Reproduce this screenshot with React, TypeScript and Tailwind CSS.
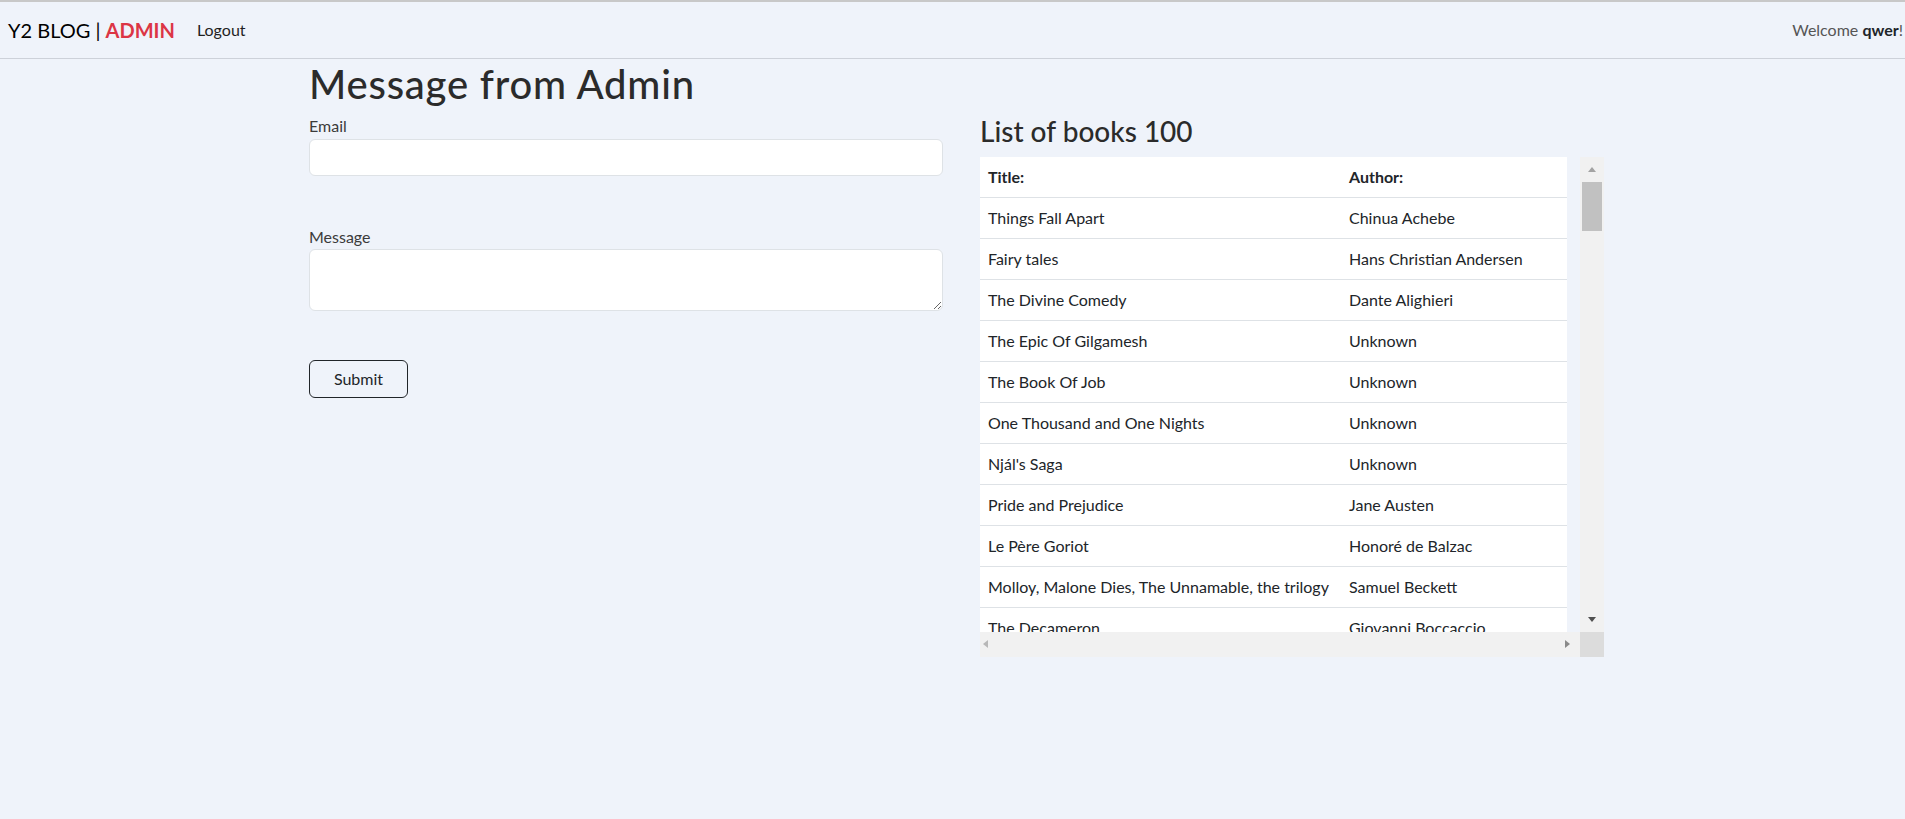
import React from 'react';

const books: [string, string][] = [
  ['Things Fall Apart', 'Chinua Achebe'],
  ['Fairy tales', 'Hans Christian Andersen'],
  ['The Divine Comedy', 'Dante Alighieri'],
  ['The Epic Of Gilgamesh', 'Unknown'],
  ['The Book Of Job', 'Unknown'],
  ['One Thousand and One Nights', 'Unknown'],
  ["Njál's Saga", 'Unknown'],
  ['Pride and Prejudice', 'Jane Austen'],
  ['Le Père Goriot', 'Honoré de Balzac'],
  ['Molloy, Malone Dies, The Unnamable, the trilogy', 'Samuel Beckett'],
  ['The Decameron', 'Giovanni Boccaccio'],
  ['Ficciones', 'Jorge Luis Borges'],
  ['Wuthering Heights', 'Emily Brontë'],
];

function Arrow({ dir, color }: { dir: 'up' | 'down' | 'left' | 'right'; color: string }) {
  const points = {
    up: '0,6 4,1 8,6',
    down: '0,1 8,1 4,6',
    left: '6,0 6,8 1,4',
    right: '1,0 1,8 6,4',
  }[dir];
  const vertical = dir === 'up' || dir === 'down';
  return (
    <svg width={vertical ? 8 : 7} height={vertical ? 7 : 8} viewBox={vertical ? '0 0 8 7' : '0 0 7 8'}>
      <polygon points={points} fill={color} />
    </svg>
  );
}

function BookTable() {
  return (
    <div className="flex w-[624px] flex-col">
      <div className="flex">
        <div className="h-[475px] w-[600px] overflow-hidden">
          <table className="w-[587px] table-fixed border-collapse bg-white text-[16px] leading-6 text-[#212529]">
            <colgroup>
              <col className="w-[361px]" />
              <col />
            </colgroup>
            <thead>
              <tr className="border-b border-[#dee2e6]">
                <th className="px-2 py-2 text-left font-bold">Title:</th>
                <th className="px-2 py-2 text-left font-bold">Author:</th>
              </tr>
            </thead>
            <tbody>
              {books.map(([title, author]) => (
                <tr key={title} className="border-b border-[#dee2e6]">
                  <td className="whitespace-nowrap px-2 py-2">{title}</td>
                  <td className="whitespace-nowrap px-2 py-2">{author}</td>
                </tr>
              ))}
            </tbody>
          </table>
        </div>
        {/* vertical scrollbar */}
        <div className="flex h-[475px] w-[24px] flex-col bg-[#f1f1f1]">
          <div className="flex h-[25px] items-center justify-center">
            <Arrow dir="up" color="#a3a3a3" />
          </div>
          <div className="mx-[2px] h-[49px] bg-[#c1c1c1]" />
          <div className="flex-1" />
          <div className="flex h-[25px] items-center justify-center">
            <Arrow dir="down" color="#505050" />
          </div>
        </div>
      </div>
      <div className="flex">
        {/* horizontal scrollbar */}
        <div className="flex h-[25px] w-[600px] items-center justify-between bg-[#f1f1f1] pl-[2px] pr-[9px]">
          <Arrow dir="left" color="#b8b8b8" />
          <Arrow dir="right" color="#8a8a8a" />
        </div>
        <div className="h-[25px] w-[24px] bg-[#dcdcdc]" />
      </div>
    </div>
  );
}

export default function App() {
  return (
    <div className="min-h-screen bg-[#eff3fa] font-['Lato','Liberation_Sans',sans-serif] text-[#212529]">
      <nav className="flex h-[59px] items-center justify-between border-t-2 border-b border-t-[#c8c8c8] border-b-[#cdd1d9] pl-2 pr-[2px]">
        <div className="flex items-center">
          <span className="text-[20px] text-black">
            Y2 BLOG | <span className="font-bold text-[#dc3545]">ADMIN</span>
          </span>
          <a className="ml-[22px] text-[16px] text-[#1f1f1f]">Logout</a>
        </div>
        <div className="text-[16px] text-[#555]">
          Welcome <span className="font-bold text-[#212529]">qwer</span>!
        </div>
      </nav>

      <main className="flex pl-[309px]">
        <div className="w-[634px]">
          <h1 className="mt-[1px] mb-[6px] text-[40px] leading-[1.2] font-medium tracking-[0.02em] text-[#2b2b2b]">
            Message from Admin
          </h1>
          <label className="block text-[16px] leading-6 text-[#3b3b3b]">Email</label>
          <input
            type="email"
            className="mt-[1px] block h-[37px] w-full rounded-[6px] border border-[#dee2e6] bg-white px-3 outline-none"
          />
          <label className="mt-[49px] block text-[16px] leading-6 text-[#3b3b3b]">Message</label>
          <textarea
            rows={2}
            className="block h-[62px] w-full rounded-[6px] border border-[#dee2e6] bg-white px-3 py-1.5 outline-none"
          />
          <button className="mt-[49px] h-[38px] w-[99px] rounded-[6px] border border-[#212529] text-[16px] text-[#212529]">
            Submit
          </button>
        </div>

        <div className="ml-[37px]">
          <h3 className="mt-[56px] mb-2 text-[28px] leading-[1.2] font-medium text-[#2b2b2b]">List of books 100</h3>
          <BookTable />
        </div>
      </main>
    </div>
  );
}
